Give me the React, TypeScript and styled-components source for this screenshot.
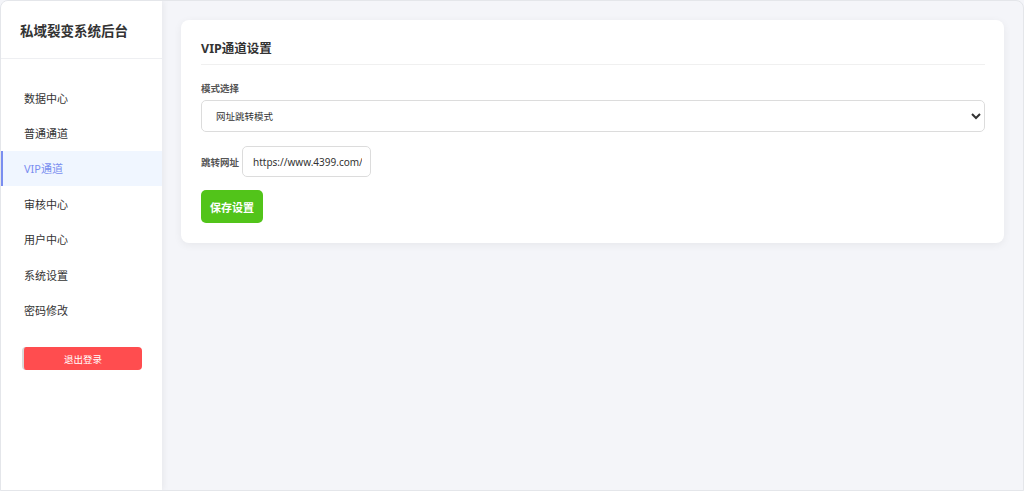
import React, { useState } from "react";
import styled, { createGlobalStyle } from "styled-components";

const Global = createGlobalStyle`
  html, body { margin: 0; padding: 0; height: 100%; }
  body { font-family: "Noto Sans", "Noto Sans CJK SC", sans-serif; background: #f4f5f9; }
  #root { height: 100%; }
  * { box-sizing: border-box; }
`;

const Frame = styled.div`
  height: 491px;
  display: flex;
  border: 1px solid #e4e6ea;
  border-radius: 8px 8px 0 0;
  overflow: hidden;
  background: #f4f5f9;
`;

const Sidebar = styled.aside`
  width: 161px;
  flex: none;
  background: #fff;
  box-shadow: 2px 0 6px rgba(0, 0, 0, 0.05);
  display: flex;
  flex-direction: column;
  position: relative;
  z-index: 1;
`;

const Brand = styled.div`
  height: 58px;
  padding: 0 0 0 19px;
  display: flex;
  align-items: center;
  border-bottom: 1px solid #eeeff2;
  font-size: 13.5px;
  font-weight: 700;
  color: #333;
`;

const Menu = styled.nav`
  display: flex;
  flex-direction: column;
  padding-top: 21px;
`;

const MenuItem = styled.a<{ $active?: boolean }>`
  height: 35.4px;
  display: flex;
  align-items: center;
  padding-left: ${(p) => (p.$active ? "21px" : "23px")};
  font-size: 11px;
  color: ${(p) => (p.$active ? "#7a8ef0" : "#333")};
  background: ${(p) => (p.$active ? "#f0f6ff" : "transparent")};
  border-left: ${(p) => (p.$active ? "2px solid #7a8ef0" : "none")};
  text-decoration: none;
  cursor: pointer;
`;

const LogoutWrap = styled.div`
  padding: 18px 20px 0 21px;
`;

const LogoutButton = styled.button`
  width: 120px;
  height: 23px;
  border: none;
  border-left: 2px solid #d9d9d9;
  border-radius: 4px;
  background: #ff4d4f;
  color: #fff;
  font-family: inherit;
  font-size: 9.5px;
  cursor: pointer;
  padding: 0;
`;

const Main = styled.main`
  flex: 1;
  padding: 19px 19px 0 19px;
`;

const Card = styled.section`
  background: #fff;
  border-radius: 8px;
  box-shadow: 0 2px 8px rgba(0, 0, 0, 0.06);
  padding: 20px 19px 20px 20px;
`;

const CardTitle = styled.h2`
  margin: 0;
  font-size: 12.5px;
  font-weight: 700;
  color: #333;
  padding: 0 0 7px 0;
  border-bottom: 1px solid #f0f0f0;
  line-height: 17px;
`;

const Field = styled.div`
  margin-top: 17px;
`;

const Label = styled.label`
  display: block;
  font-size: 9.5px;
  font-weight: 600;
  color: #555;
  margin-bottom: 5px;
  line-height: 13px;
`;

const Select = styled.select`
  width: 100%;
  height: 32px;
  border: 1px solid #dcdcdc;
  border-radius: 5px;
  padding: 0 10px;
  font-family: inherit;
  font-size: 9.5px;
  color: #333;
  background: #fff;
`;

const InlineField = styled.div`
  display: flex;
  align-items: center;
  gap: 3px;
  margin-top: 14px;
`;

const InlineLabel = styled.label`
  font-size: 9.5px;
  font-weight: 600;
  color: #555;
`;

const TextInput = styled.input`
  width: 129px;
  height: 31px;
  border: 1px solid #dcdcdc;
  border-radius: 5px;
  padding: 0 8px 0 10px;
  font-family: inherit;
  font-size: 10px;
  color: #333;
  background: #fff;
`;

const SaveButton = styled.button`
  margin-top: 13px;
  width: 62px;
  height: 33px;
  border: none;
  border-radius: 5px;
  background: #52c41a;
  color: #fff;
  font-family: inherit;
  font-size: 11px;
  font-weight: 700;
  cursor: pointer;
  padding: 0;
  display: block;
`;

const items = ["数据中心", "普通通道", "VIP通道", "审核中心", "用户中心", "系统设置", "密码修改"];

export default function App() {
  const [url, setUrl] = useState("https://www.4399.com/");
  return (
    <>
      <Global />
      <Frame>
        <Sidebar>
          <Brand>私域裂变系统后台</Brand>
          <Menu>
            {items.map((t) => (
              <MenuItem key={t} $active={t === "VIP通道"}>
                {t}
              </MenuItem>
            ))}
          </Menu>
          <LogoutWrap>
            <LogoutButton>退出登录</LogoutButton>
          </LogoutWrap>
        </Sidebar>
        <Main>
          <Card>
            <CardTitle>VIP通道设置</CardTitle>
            <Field>
              <Label>模式选择</Label>
              <Select defaultValue="url">
                <option value="url">网址跳转模式</option>
              </Select>
            </Field>
            <InlineField>
              <InlineLabel>跳转网址</InlineLabel>
              <TextInput value={url} onChange={(e) => setUrl(e.target.value)} />
            </InlineField>
            <SaveButton>保存设置</SaveButton>
          </Card>
        </Main>
      </Frame>
    </>
  );
}
